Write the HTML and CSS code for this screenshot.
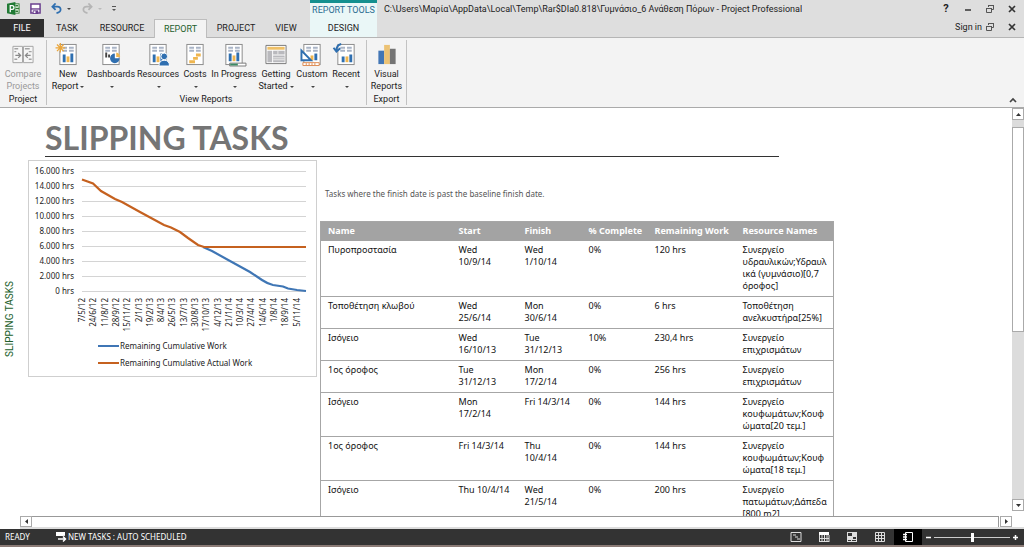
FILE: index.html
```html
<!DOCTYPE html>
<html lang="en">
<head>
<meta charset="utf-8">
<title>Γυμνάσιο_6 Ανάθεση Πόρων - Project Professional</title>
<link rel="stylesheet" href="styles.css">
</head>
<body>
<svg class="defs" aria-hidden="true">
  <symbol id="page" viewBox="0 0 24 24">
    <rect x="3.5" y="1.5" width="17" height="21" fill="#fff" stroke="#8a8a8a"/>
    <path d="M6 5h5M13 5h5M6 8h5M13 8h5" stroke="#a9b4c6" stroke-width="2"/>
  </symbol>
  <symbol id="restore" viewBox="0 0 10 10">
    <path d="M3.500 3V1.500h5v4H7M3 1.500h6" fill="none" stroke="#555"/>
    <path d="M1.500 4.500h5v4h-5zM1 4.500h6" fill="none" stroke="#555"/>
  </symbol>
  <symbol id="close" viewBox="0 0 10 10">
    <path d="M2 2l6 6M8 2L2 8" stroke="#333" stroke-width="1.700"/>
  </symbol>
</svg>
<div class="app">
  <header class="header">
    <div class="left">
      <div class="quick">
        <svg class="app-logo" viewBox="0 0 14 14" role="img" aria-label="Project"><rect x="5" y="2" width="8" height="10" fill="#fff" stroke="#2f7d32"/><path d="M9 4h3M9 7h4M9 10h3" stroke="#2f7d32" stroke-width="1.500"/><path d="M0 2l9-2v14l-9-2z" fill="#217a35"/><path d="M3.500 11V4h2q2 0 2 2t-2 2h-2" fill="none" stroke="#fff" stroke-width="1.400"/></svg>
        <button class="quick-btn save" aria-label="Save"><svg viewBox="0 0 12 12"><path d="M1 1h10v10H1z" fill="#fff" stroke="#6a3f8e" stroke-width="1.600"/><path d="M1 6.500h10" stroke="#6a3f8e" stroke-width="1.500"/><path d="M3 8h6v4H3z" fill="#6a3f8e"/><path d="M4 9h2v2H4z" fill="#fff"/></svg></button>
        <button class="quick-btn undo" aria-label="Undo"><svg viewBox="0 0 12 12"><path d="M5 .5L1.500 4 5 7.500M1.500 4H7q3.500 0 3.500 3T6 11" fill="none" stroke="#2f6fb0" stroke-width="1.900"/></svg></button>
        <span class="caret"></span>
        <button class="quick-btn redo" aria-label="Redo"><svg viewBox="0 0 12 12"><path d="M7 .5L10.500 4 7 7.500M10.500 4H5Q1.500 4 1.500 7T6 11" fill="none" stroke="#b5b5b5" stroke-width="1.900"/></svg></button>
        <span class="caret pale"></span>
        <button class="quick-btn more" aria-label="Customize toolbar"><svg viewBox="0 0 11 11"><path d="M2 3.500h4" stroke="#555"/><path d="M2 6h4L4 8z" fill="#555"/></svg></button>
      </div>
      <nav class="tabs">
        <button class="tab file">FILE</button>
        <button class="tab t-task">TASK</button>
        <button class="tab t-resource">RESOURCE</button>
        <button class="tab t-report active">REPORT</button>
        <button class="tab t-project">PROJECT</button>
        <button class="tab t-view">VIEW</button>
      </nav>
    </div>
    <div class="context">
      <div class="context-title">REPORT TOOLS</div>
      <button class="tab">DESIGN</button>
    </div>
    <div class="right">
      <div class="bar">
        <div class="doc-title">C:\Users\Μαρία\AppData\Local\Temp\Rar$DIa0.818\Γυμνάσιο_6 Ανάθεση Πόρων - Project Professional</div>
        <div class="window-buttons">
          <button class="win help" aria-label="Help">?</button>
          <button class="win" aria-label="Minimize"><svg viewBox="0 0 10 10"><path d="M2 6h6" stroke="#333" stroke-width="1.500"/></svg></button>
          <button class="win" aria-label="Restore"><svg><use href="#restore"/></svg></button>
          <button class="win" aria-label="Close"><svg><use href="#close"/></svg></button>
        </div>
      </div>
      <div class="bar second">
        <a class="sign-in" href="#">Sign in</a>
        <div class="window-buttons">
          <button class="win" aria-label="Restore document"><svg><use href="#restore"/></svg></button>
          <button class="win" aria-label="Close document"><svg><use href="#close"/></svg></button>
        </div>
      </div>
    </div>
  </header>

  <section class="ribbon">
    <div class="group g-project">
      <div class="tools">
        <button class="tool disabled">
          <svg viewBox="0 0 24 24"><path d="M1.500 3.500h10v17h-10zM12.500 3.500h10v17h-10z" fill="#f6f6f6" stroke="#a3a3a3"/><path d="M3 6h4M14 6h5M3 9h2M18 9h3M3 17h3M18 17h3" stroke="#a3a3a3" stroke-width="1.500"/><path d="M4 13h5M7 10.500L9.500 13 7 15.500M20 13h-5M17 10.500L14.500 13l2.500 2.500" fill="none" stroke="#8a8a8a" stroke-width="1.300"/></svg>
          <span>Compare<br>Projects</span>
        </button>
      </div>
      <div class="group-name">Project</div>
    </div>
    <div class="group g-view">
      <div class="tools">
        <button class="tool w-36">
          <svg viewBox="0 0 24 24"><use href="#page"/><path d="M8 20v-8M16 20v-9" stroke="#2f6fb0" stroke-width="3"/><path d="M12 20v-6" stroke="#efb650" stroke-width="3"/><circle cx="4" cy="5" r="3" fill="#fff3d6"/><path d="M4 0v10M-1 5H9M.5 1.500l7 7M7.500 1.500l-7 7" stroke="#eaa53c" stroke-width="1.300"/></svg>
          <span>New<br>Report<i class="caret"></i></span>
        </button>
        <button class="tool w-50">
          <svg viewBox="0 0 24 24"><use href="#page"/><path d="M7 15v-5M10 15v-3M13 15v-2" stroke="#444" stroke-width="2"/><path d="M16 11a5 5 0 1 0 5 5h-5z" fill="#2f6fb0"/><path d="M17.500 10a5 5 0 0 1 4 4.500h-4z" fill="#efb650"/></svg>
          <span>Dashboards<br><i class="caret"></i></span>
        </button>
        <button class="tool w-44">
          <svg viewBox="0 0 24 24"><use href="#page"/><path d="M8 20v-8M16 20v-9" stroke="#2f6fb0" stroke-width="3"/><path d="M12 20v-6" stroke="#efb650" stroke-width="3"/><circle cx="18.500" cy="14" r="3.500" fill="#2f6fb0" stroke="#fff"/><path d="M13 24q0-6 5.500-6t5.500 6z" fill="#2f6fb0" stroke="#fff"/></svg>
          <span>Resources<br><i class="caret"></i></span>
        </button>
        <button class="tool w-30">
          <svg viewBox="0 0 24 24"><use href="#page"/><path d="M13 12.500h5M10 16h5M6 19.500h6" stroke="#efb650" stroke-width="3"/></svg>
          <span>Costs<br><i class="caret"></i></span>
        </button>
        <button class="tool w-48">
          <svg viewBox="0 0 24 24"><use href="#page"/><path d="M8 19v-8M16 19v-9" stroke="#2f6fb0" stroke-width="3"/><path d="M12 19v-6" stroke="#efb650" stroke-width="3"/><path d="M7.500 21h17v3h-17z" fill="#fff" stroke="#777"/><path d="M8 21.500h8v2H8z" fill="#3c8a63"/></svg>
          <span>In Progress<br><i class="caret"></i></span>
        </button>
        <button class="tool w-36">
          <svg viewBox="0 0 24 24"><path d="M1.500 2.500h21v19h-21z" fill="#fff" stroke="#777"/><path d="M3 5.500h18" stroke="#efc067" stroke-width="3"/><path d="M3 8h5v12H3zM9 8h12v4H9zM9 13h12v7H9z" fill="#b9b9bd"/><path d="M9 15.500h12M9 17.500h12M14 8v4" stroke="#ececec"/></svg>
          <span>Getting<br>Started<i class="caret"></i></span>
        </button>
        <button class="tool w-36">
          <svg viewBox="0 0 24 24"><use href="#page"/><path d="M16 18v-7" stroke="#2f6fb0" stroke-width="3"/><path d="M12 18v-5" stroke="#efb650" stroke-width="3"/><path d="M1 8v10h10z" fill="#fff" stroke="#2f6fb0" stroke-width="2"/><path d="M2.500 20.500h17v3h-17z" fill="#fff" stroke="#dc8a52"/><path d="M6 21v2M9 21v2M12 21v2M15 21v2" stroke="#dc8a52"/></svg>
          <span>Custom<br><i class="caret"></i></span>
        </button>
        <button class="tool w-32">
          <svg viewBox="0 0 24 24"><use href="#page"/><path d="M9 20v-6M17 20v-8" stroke="#2f6fb0" stroke-width="3"/><path d="M13 20v-6" stroke="#efb650" stroke-width="3"/><path d="M7 1Q2 2 2 8M-1 5L2 9 6 5.500" fill="none" stroke="#2f6fb0" stroke-width="2"/></svg>
          <span>Recent<br><i class="caret"></i></span>
        </button>
      </div>
      <div class="group-name">View Reports</div>
    </div>
    <div class="group g-export">
      <div class="tools">
        <button class="tool">
          <svg viewBox="0 0 24 24"><path d="M3 8h6v14H3z" fill="#4276b5"/><path d="M9 2h6v20H9z" fill="#ecc274"/><path d="M15 6h6v16h-6z" fill="#747474"/></svg>
          <span>Visual<br>Reports</span>
        </button>
      </div>
      <div class="group-name">Export</div>
    </div>
    <button class="collapse" aria-label="Collapse the ribbon"><svg viewBox="0 0 10 10"><path d="M2 7l3-3 3 3" fill="none" stroke="#444" stroke-width="1.700"/></svg></button>
  </section>

  <main class="workspace">
    <div class="side-name"><span>SLIPPING TASKS</span></div>
    <div class="pane">
      <div class="view">
        <article class="report">
          <h1 class="report-title">SLIPPING TASKS</h1>
          <div class="report-body">
            <figure class="chart">
              <svg viewBox="0 0 287 215" role="img" aria-label="Remaining cumulative work and actual work">
                <path d="M53 10.500h224M53 25.500h224M53 40.500h224M53 55.500h224M53 70.500h224M53 85.500h224M53 100.500h224M53 115.500h224M53 130.500h224" stroke="#d4d4d4"/>
                <g text-anchor="end">
                  <text x="45" y="13">16.000 hrs</text><text x="45" y="28">14.000 hrs</text><text x="45" y="43">12.000 hrs</text><text x="45" y="58">10.000 hrs</text><text x="45" y="73">8.000 hrs</text><text x="45" y="88">6.000 hrs</text><text x="45" y="103">4.000 hrs</text><text x="45" y="118">2.000 hrs</text><text x="45" y="133">0 hrs</text>
                </g>
                <path d="M174 86L183 90 201 100 221 111 233 119Q239 123 244 124L254 125.500 259 127.500 268 129 277 130" fill="none" stroke="#3f76b5" stroke-width="2.200"/>
                <path d="M53 18.500L64 22.500 72 30 86 38 93 41 111 51 135 64 142 66.500 151 71 159 77 169 84 175 86H277" fill="none" stroke="#c5611f" stroke-width="2.200"/>
                <g text-anchor="end">
                  <text transform="translate(56 137) rotate(-90)">7/5/12</text><text transform="translate(67 137) rotate(-90)">24/6/12</text><text transform="translate(79 137) rotate(-90)">11/8/12</text><text transform="translate(90 137) rotate(-90)">28/9/12</text><text transform="translate(101 137) rotate(-90)">15/11/12</text><text transform="translate(113 137) rotate(-90)">2/1/13</text><text transform="translate(124 137) rotate(-90)">19/2/13</text><text transform="translate(135 137) rotate(-90)">8/4/13</text><text transform="translate(146 137) rotate(-90)">26/5/13</text><text transform="translate(158 137) rotate(-90)">13/7/13</text><text transform="translate(169 137) rotate(-90)">30/8/13</text><text transform="translate(180 137) rotate(-90)">17/10/13</text><text transform="translate(192 137) rotate(-90)">4/12/13</text><text transform="translate(203 137) rotate(-90)">21/1/14</text><text transform="translate(214 137) rotate(-90)">10/3/14</text><text transform="translate(225 137) rotate(-90)">27/4/14</text><text transform="translate(237 137) rotate(-90)">14/6/14</text><text transform="translate(248 137) rotate(-90)">1/8/14</text><text transform="translate(259 137) rotate(-90)">18/9/14</text><text transform="translate(271 137) rotate(-90)">5/11/14</text>
                </g>
                <path d="M69 185h21" stroke="#3f76b5" stroke-width="2"/>
                <path d="M69 202h21" stroke="#c5611f" stroke-width="2"/>
                <text x="91" y="188">Remaining Cumulative Work</text>
                <text x="91" y="205">Remaining Cumulative Actual Work</text>
              </svg>
            </figure>
            <div class="details">
              <p class="intro">Tasks where the finish date is past the baseline finish date.</p>
              <table class="tasks">
                <colgroup><col class="c-name"><col class="c-start"><col class="c-finish"><col class="c-complete"><col class="c-work"><col class="c-resource"></colgroup>
                <thead><tr><th>Name</th><th>Start</th><th>Finish</th><th>% Complete</th><th>Remaining Work</th><th>Resource Names</th></tr></thead>
                <tbody>
                  <tr><td>Πυροπροστασία</td><td>Wed<br>10/9/14</td><td>Wed<br>1/10/14</td><td>0%</td><td>120 hrs</td><td>Συνεργείο<br>υδραυλικών;Υδραυλ<br>ικά (γυμνάσιο)[0,7<br>όροφος]</td></tr>
                  <tr><td>Τοποθέτηση κλωβού</td><td>Wed<br>25/6/14</td><td>Mon<br>30/6/14</td><td>0%</td><td>6 hrs</td><td>Τοποθέτηση<br>ανελκυστήρα[25%]</td></tr>
                  <tr><td>Ισόγειο</td><td>Wed<br>16/10/13</td><td>Tue<br>31/12/13</td><td>10%</td><td>230,4 hrs</td><td>Συνεργείο<br>επιχρισμάτων</td></tr>
                  <tr><td>1ος όροφος</td><td>Tue<br>31/12/13</td><td>Mon<br>17/2/14</td><td>0%</td><td>256 hrs</td><td>Συνεργείο<br>επιχρισμάτων</td></tr>
                  <tr><td>Ισόγειο</td><td>Mon<br>17/2/14</td><td>Fri 14/3/14</td><td>0%</td><td>144 hrs</td><td>Συνεργείο<br>κουφωμάτων;Κουφ<br>ώματα[20 τεμ.]</td></tr>
                  <tr><td>1ος όροφος</td><td>Fri 14/3/14</td><td>Thu<br>10/4/14</td><td>0%</td><td>144 hrs</td><td>Συνεργείο<br>κουφωμάτων;Κουφ<br>ώματα[18 τεμ.]</td></tr>
                  <tr><td>Ισόγειο</td><td>Thu 10/4/14</td><td>Wed<br>21/5/14</td><td>0%</td><td>200 hrs</td><td>Συνεργείο<br>πατωμάτων;Δάπεδα<br>[800 m2]</td></tr>
                </tbody>
              </table>
            </div>
          </div>
        </article>
        <div class="v-scroll">
          <button class="scroll-btn" aria-label="Scroll up"><svg viewBox="0 0 9 9"><path d="M2 6h5L4.500 3z" fill="#333"/></svg></button>
          <div class="v-track"><div class="v-thumb"></div></div>
          <button class="scroll-btn" aria-label="Scroll down"><svg viewBox="0 0 9 9"><path d="M2 3h5L4.500 6z" fill="#333"/></svg></button>
        </div>
      </div>
      <div class="h-scroll">
        <button class="scroll-btn" aria-label="Scroll left"><svg viewBox="0 0 9 9"><path d="M6 2v5L3 4.500z" fill="#333"/></svg></button>
        <div class="h-track"></div>
        <button class="scroll-btn" aria-label="Scroll right"><svg viewBox="0 0 9 9"><path d="M3 2v5l3-2.500z" fill="#333"/></svg></button>
      </div>
    </div>
  </main>

  <footer class="status">
    <span class="ready">READY</span>
    <button class="mode"><svg viewBox="0 0 12 12"><path d="M1 1h9v4H1z" fill="#fff"/><path d="M4 8h6M8 5.500L10.500 8 8 10.500" fill="none" stroke="#333" stroke-width="3"/><path d="M3 8h7M8 5.500L10.500 8 8 10.500" fill="none" stroke="#fff" stroke-width="1.500"/></svg>NEW TASKS : AUTO SCHEDULED</button>
    <div class="views">
      <button class="view-btn" aria-label="Gantt chart"><svg viewBox="0 0 12 12"><path d="M1 1.500h10v9H1z" fill="none" stroke="#ddd"/><path d="M3 4h3M5 6h3M7 8h3" stroke="#ddd"/></svg></button>
      <button class="view-btn" aria-label="Task usage"><svg viewBox="0 0 12 12"><path d="M1 1h10v3H1z" fill="#fff"/><path d="M1.500 4v7M4 4v7M6.500 4v7M9 4v7M11 4v7M1 10.500h10M1 7.500h10" stroke="#ddd"/></svg></button>
      <button class="view-btn" aria-label="Team planner"><svg viewBox="0 0 12 12"><path d="M1 1h10v10H1z" fill="#ddd"/><path d="M2 2h4v3H2zM7 6h3v2H7zM2 9h3v1H2zM6 9h4v1H6z" fill="#333"/></svg></button>
      <button class="view-btn" aria-label="Resource sheet"><svg viewBox="0 0 12 12"><path d="M1.500 1.500h9v9h-9zM4.500 1v10M7.500 1v10M1 4.500h10M1 7.500h10" fill="none" stroke="#ddd"/></svg></button>
      <button class="view-btn on" aria-label="Report"><svg viewBox="0 0 12 12"><path d="M3.500 1.500h7v9h-7z" fill="none" stroke="#fff"/><path d="M1 3.500h4M1 6h4M1 8.500h4" stroke="#fff" stroke-width="1.500"/></svg></button>
    </div>
    <div class="zoom">
      <button class="zoom-btn" aria-label="Zoom out"><svg viewBox="0 0 7 7"><path d="M1 3.500h5" stroke="#fff" stroke-width="1.500"/></svg></button>
      <input class="zoom-range" type="range" min="0" max="100" value="50" aria-label="Zoom">
      <button class="zoom-btn" aria-label="Zoom in"><svg viewBox="0 0 7 7"><path d="M1 3.500h5M3.500 1v5" stroke="#fff" stroke-width="1.500"/></svg></button>
    </div>
  </footer>
</div>
</body>
</html>
```

FILE: styles.css
```css
* { box-sizing: border-box; }
body { margin: 0; font-family: Roboto, "Noto Sans", sans-serif; font-size: 9px; line-height: 12px; color: #222; }
button { font: inherit; color: inherit; background: none; border: 0; padding: 0; margin: 0; }
svg { display: block; }
.defs { display: none; }

.app { display: flex; flex-direction: column; height: 100vh; background: #fff; border-bottom: 2px solid #8b7b76; }

.header { display: flex; height: 38px; background: #dedede; border-bottom: 1px solid #b5b5b5; }
.left { display: flex; flex-direction: column; width: 310px; }
.quick { display: flex; align-items: center; height: 19px; padding: 0 0 2px 7px; }
.app-logo { width: 13px; height: 13px; margin-right: 10px; }
.quick-btn svg { width: 11px; height: 11px; }
.undo { margin-left: 10px; }
.undo, .redo { margin-right: 5px; }
.redo { margin-left: 11px; }
.more { margin-left: 8px; }
.caret { display: inline-block; vertical-align: middle; margin-left: 2px; border: 2px solid transparent; border-top-color: #444; border-bottom-width: 0; }
.quick .caret { margin-left: 0; }
.caret.pale { border-top-color: #bbb; }
.tabs { display: flex; height: 18px; }
.tab { height: 18px; text-align: center; white-space: nowrap; }
.file { width: 44px; background: #2f2f2f; color: #fff; }
.t-task { width: 46px; }
.t-resource { width: 64px; }
.t-report { width: 53px; }
.t-project { width: 58px; }
.t-view { width: 42px; }
.tab.active { height: 19px; background: #f3f3f3; border: 1px solid #bdbdbd; border-bottom: 0; color: #245f2c; }
.context { width: 67px; display: flex; flex-direction: column; background: #eaf7f7; border-top: 3px solid #14908f; text-align: center; white-space: nowrap; }
.context-title { height: 16px; line-height: 14px; color: #2b6d92; }
.right { flex: 1; min-width: 0; }
.bar { display: flex; align-items: center; justify-content: space-between; height: 18px; padding: 0 7px; }
.second { justify-content: flex-end; gap: 3px; }
.doc-title { white-space: nowrap; overflow: hidden; }
.window-buttons { display: flex; gap: 12px; }
.win svg { width: 10px; height: 10px; }
.win { width: 10px; }
.help { font-weight: 700; font-size: 11px; }
.sign-in { color: #222; text-decoration: none; }

.ribbon { display: flex; height: 70px; background: #f3f3f3; border-bottom: 1px solid #aaa; }
.group { display: flex; flex-direction: column; margin: 2px 0; padding-top: 3px; border-right: 1px solid #c2c2c2; }
.g-project { width: 47px; }
.g-view { padding-left: 3px; width: 320px; }
.g-view .group-name { margin-right: 4px; }
.g-export { width: 40px; }
.tools { display: flex; flex: 1; }
.tool { display: flex; flex-direction: column; align-items: center; gap: 2px; flex: 1; white-space: nowrap; }
.tool svg { width: 24px; height: 23px; overflow: visible; }
.tool.disabled { color: #999; }
.w-30 { flex: 0 0 30px; }
.w-32 { flex: 0 0 32px; }
.w-36 { flex: 0 0 36px; }
.w-44 { flex: 0 0 44px; }
.w-48 { flex: 0 0 48px; }
.w-50 { flex: 0 0 50px; }
.group-name { text-align: center; height: 13px; line-height: 14px; }
.collapse { align-self: flex-end; margin: 0 6px 2px auto; }
.collapse svg { width: 10px; height: 10px; }

.workspace { display: flex; flex: 1; min-height: 0; }
.side-name { width: 20px; display: flex; align-items: center; justify-content: center; font-size: 10px; color: #245f2c; }
.side-name span { writing-mode: vertical-rl; transform: rotate(180deg); white-space: nowrap; }
.pane { flex: 1; min-width: 0; display: flex; flex-direction: column; }
.view { flex: 1; min-height: 0; display: flex; }
.report { flex: 1; min-width: 0; overflow: hidden; padding: 12px 0 0 8px; }
.report-title { margin: 0 0 3px 17px; width: 734px; height: 37px; border-bottom: 1px solid #333; font-family: Lato, sans-serif; font-size: 32px; line-height: 35px; font-weight: 700; color: #757575; white-space: nowrap; }
.report-body { display: flex; align-items: flex-start; gap: 3px; }
.chart { margin: 0; flex: 0 0 289px; border: 1px solid #cfcfcf; }
.chart text { font-family: "Noto Sans", sans-serif; font-size: 8px; fill: #222; }
.details { flex: 0 0 513px; }
.intro { margin: 28px 0 21px 5px; color: #555; font-family: "Noto Sans", sans-serif; font-size: 8px; }
.tasks { width: 513px; table-layout: fixed; border-collapse: collapse; border: 1px solid #a6a6a6; white-space: nowrap; font-family: "Noto Sans", sans-serif; }
.tasks th { height: 19px; padding: 0 7px; background: #a3a3a3; color: #fff; text-align: left; font-weight: 700; }
.tasks td { padding: 3px 0 4px 7px; vertical-align: top; border-bottom: 1px solid #a6a6a6; color: #111; }
.c-name { width: 131px; }
.c-start, .c-complete { width: 66px; }
.c-finish { width: 64px; }
.c-work { width: 88px; }
.c-resource { width: 98px; }

.v-scroll { width: 12px; display: flex; flex-direction: column; padding-bottom: 5px; }
.scroll-btn { flex: 0 0 12px; display: flex; align-items: center; justify-content: center; border: 1px solid #aaa; background: #fff; }
.scroll-btn svg { width: 9px; height: 9px; }
.v-track { flex: 1; background: #dcdcdc; padding-top: 7px; }
.v-thumb { height: 55%; background: #fff; border: 1px solid #aaa; }
.h-scroll { display: flex; height: 13px; padding-right: 12px; border-bottom: 2px solid #ddd; }
.h-track { flex: 1; background: #fff; border-top: 1px solid #999; border-right: 1px solid #999; margin-right: 1px; }

.status { display: flex; align-items: center; height: 16px; background: #333; color: #fff; white-space: nowrap; font-family: "Noto Sans", sans-serif; font-size: 8px; }
.ready { width: 55px; padding-left: 5px; }
.mode { display: flex; align-items: center; gap: 1px; }
.mode svg { width: 12px; height: 12px; }
.views { display: flex; margin-left: auto; height: 100%; }
.view-btn { width: 28px; display: flex; align-items: center; justify-content: center; }
.view-btn svg { width: 12px; height: 12px; }
.view-btn.on { background: #000; }
.zoom { display: flex; align-items: center; gap: 2px; padding: 0 5px 0 3px; }
.zoom-btn svg { width: 7px; height: 7px; }
.zoom-range { appearance: none; width: 76px; height: 10px; margin: 0; background: linear-gradient(#ccc, #ccc) center / 100% 1px no-repeat; }
.zoom-range::-webkit-slider-thumb { appearance: none; width: 3px; height: 9px; background: #fff; }
```
